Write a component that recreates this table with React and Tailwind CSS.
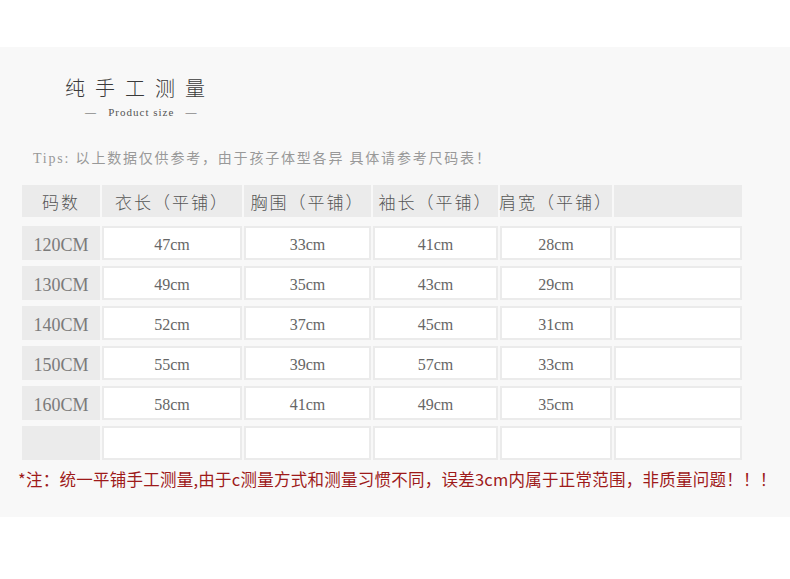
const headers = ["码数", "衣长（平铺）", "胸围（平铺）", "袖长（平铺）", "肩宽（平铺）", ""];

const rows = [
  ["120CM", "47cm", "33cm", "41cm", "28cm", ""],
  ["130CM", "49cm", "35cm", "43cm", "29cm", ""],
  ["140CM", "52cm", "37cm", "45cm", "31cm", ""],
  ["150CM", "55cm", "39cm", "57cm", "33cm", ""],
  ["160CM", "58cm", "41cm", "49cm", "35cm", ""],
  ["", "", "", "", "", ""],
];

const serif = "font-['Liberation_Serif','Noto_Sans_CJK_SC',serif]";
const cjk = "font-['Noto_Sans_CJK_SC','Noto_Sans_CJK_SC',sans-serif]";
const cols = "grid grid-cols-[78px_140px_127px_125px_112px_128px] gap-x-[2px]";

function App() {
  return (
    <div className="w-full h-[579px] bg-white overflow-hidden">
      <div className="mt-[47px] h-[470px] bg-[#f8f8f8] flex flex-col">
        <div className="pl-[65px] pt-[28px] w-[300px]">
          <div className={`${cjk} text-[20px] leading-[26px] tracking-[10px] text-[#3a3a3a] font-light`}>
            纯手工测量
          </div>
          <div className={`${serif} mt-[4px] pl-[20px] text-[11px] leading-[14px] tracking-[1px] text-[#555] whitespace-pre`}>
            {"—   Product size   —"}
          </div>
        </div>

        <div className={`${serif} mt-[30px] pl-[33px] text-[14px] leading-[20px] text-[#999] tracking-[1.8px] whitespace-pre`}>
          {"Tips: 以上数据仅供参考，由于孩子体型各异 具体请参考尺码表！"}
        </div>

        <div className="ml-[22px] mt-[16px] flex flex-col">
          <div className={cols}>
            {headers.map((h, i) => (
              <div
                key={i}
                className={`${cjk} h-[32px] bg-[#ebebeb] flex items-center justify-center whitespace-nowrap text-[17px] tracking-[2px] text-[#555] font-light pt-[2px]`}
              >
                {h}
              </div>
            ))}
          </div>
          <div className="mt-[9px] flex flex-col gap-y-[6px]">
            {rows.map((r, ri) => (
              <div key={ri} className={cols}>
                {r.map((v, ci) =>
                  ci === 0 ? (
                    <div
                      key={ci}
                      className={`${serif} h-[34px] bg-[#ebebeb] flex items-center justify-center text-[18px] text-[#7a7a7a] pt-[4px]`}
                    >
                      {v}
                    </div>
                  ) : (
                    <div
                      key={ci}
                      className={`${serif} h-[34px] bg-white border-2 border-[#ebebeb] flex items-center justify-center text-[16px] text-[#666] pt-[4px]`}
                    >
                      {v}
                    </div>
                  )
                )}
              </div>
            ))}
          </div>
        </div>

        <div className={`${cjk} mt-[7px] pl-[18px] text-[16.5px] leading-[24px] text-[#9e1a1a] whitespace-nowrap tracking-[0.25px]`}>
          *注：统一平铺手工测量,由于c测量方式和测量习惯不同，误差3cm内属于正常范围，非质量问题！！！
        </div>
      </div>
    </div>
  );
}

export default App;
